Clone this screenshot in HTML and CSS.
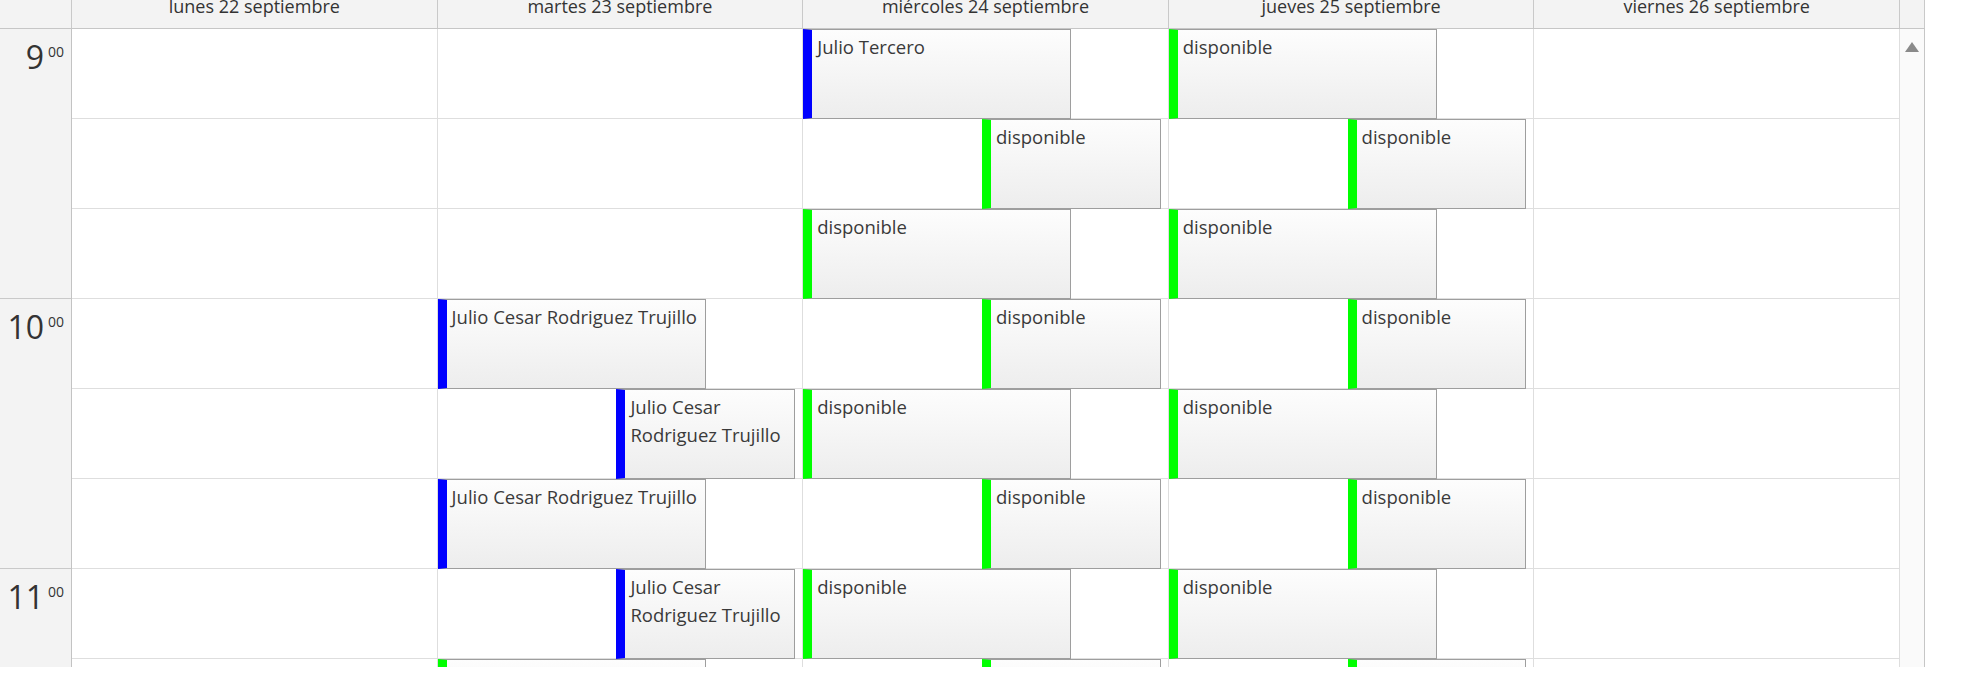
FILE: index.html
```html
<!DOCTYPE html>
<html lang="es">
<head>
  <meta charset="UTF-8">
  <title>Agenda semanal</title>
  <link rel="stylesheet" href="styles.css">
</head>
<body>
<div class="scheduler">
  <div class="head">
    <div class="corner"></div>
    <div class="day-head">lunes 22 septiembre</div>
    <div class="day-head">martes 23 septiembre</div>
    <div class="day-head">miércoles 24 septiembre</div>
    <div class="day-head">jueves 25 septiembre</div>
    <div class="day-head">viernes 26 septiembre</div>
    <div class="scroll-head"></div>
  </div>

  <div class="main">
    <div class="hours">
      <div class="hour"><span class="h">9</span><span class="m">00</span></div>
      <div class="hour"><span class="h">10</span><span class="m">00</span></div>
      <div class="hour"><span class="h">11</span><span class="m">00</span></div>
    </div>

    <!-- lunes -->
    <div class="day">
      <div class="slot"></div><div class="slot"></div><div class="slot"></div><div class="slot"></div>
      <div class="slot"></div><div class="slot"></div><div class="slot"></div><div class="slot"></div>
    </div>

    <!-- martes -->
    <div class="day">
      <div class="slot"></div><div class="slot"></div><div class="slot"></div><div class="slot"></div>
      <div class="slot"></div><div class="slot"></div><div class="slot"></div><div class="slot"></div>
      <div class="event first busy" style="top: 270px">Julio Cesar Rodriguez Trujillo</div>
      <div class="event second busy" style="top: 360px">Julio Cesar Rodriguez Trujillo</div>
      <div class="event first busy" style="top: 450px">Julio Cesar Rodriguez Trujillo</div>
      <div class="event second busy" style="top: 540px">Julio Cesar Rodriguez Trujillo</div>
      <div class="event first free" style="top: 630px">disponible</div>
    </div>

    <!-- miércoles -->
    <div class="day">
      <div class="slot"></div><div class="slot"></div><div class="slot"></div><div class="slot"></div>
      <div class="slot"></div><div class="slot"></div><div class="slot"></div><div class="slot"></div>
      <div class="event first busy" style="top: 0px">Julio Tercero</div>
      <div class="event second free" style="top: 90px">disponible</div>
      <div class="event first free" style="top: 180px">disponible</div>
      <div class="event second free" style="top: 270px">disponible</div>
      <div class="event first free" style="top: 360px">disponible</div>
      <div class="event second free" style="top: 450px">disponible</div>
      <div class="event first free" style="top: 540px">disponible</div>
      <div class="event second free" style="top: 630px">disponible</div>
    </div>

    <!-- jueves -->
    <div class="day">
      <div class="slot"></div><div class="slot"></div><div class="slot"></div><div class="slot"></div>
      <div class="slot"></div><div class="slot"></div><div class="slot"></div><div class="slot"></div>
      <div class="event first free" style="top: 0px">disponible</div>
      <div class="event second free" style="top: 90px">disponible</div>
      <div class="event first free" style="top: 180px">disponible</div>
      <div class="event second free" style="top: 270px">disponible</div>
      <div class="event first free" style="top: 360px">disponible</div>
      <div class="event second free" style="top: 450px">disponible</div>
      <div class="event first free" style="top: 540px">disponible</div>
      <div class="event second free" style="top: 630px">disponible</div>
    </div>

    <!-- viernes -->
    <div class="day">
      <div class="slot"></div><div class="slot"></div><div class="slot"></div><div class="slot"></div>
      <div class="slot"></div><div class="slot"></div><div class="slot"></div><div class="slot"></div>
    </div>

    <div class="scrollbar"><span class="arrow-up"></span></div>
  </div>
</div>
</body>
</html>
```

FILE: styles.css
```css
body {
  margin: 0;
  background: #fff;
  font-family: "Open Sans", "Noto Sans", sans-serif;
  color: #333;
}

.scheduler {
  width: 1925px;
  margin-top: -15px;
}

.head,
.main {
  display: grid;
  grid-template-columns: 72px repeat(5, 1fr) 25px;
}

.head {
  background: #f3f3f3;
  border-bottom: 1px solid #c6c6c6;
}
.corner,
.day-head {
  border-right: 1px solid #c9c9c9;
}
.day-head {
  height: 43px;
  line-height: 43px;
  font-size: 18px;
  text-align: center;
  white-space: nowrap;
  overflow: hidden;
}
.scroll-head {
  border-right: 1px solid #c9c9c9;
}

.main {
  height: 638px;
  overflow: hidden;
}

.hours {
  background: #f3f3f3;
  border-right: 1px solid #c3c3c3;
}
.hour {
  box-sizing: border-box;
  height: 270px;
  border-bottom: 1px solid #c9c9c9;
  display: flex;
  justify-content: flex-end;
  align-items: flex-start;
  padding: 12px 7px 0 0;
}
.hour .h {
  font-size: 32px;
  line-height: 32px;
}
.hour .m {
  font-size: 14px;
  line-height: 14px;
  margin: 4px 0 0 4px;
}

.day {
  position: relative;
  border-right: 1px solid #dedede;
}
.slot {
  box-sizing: border-box;
  height: 90px;
  border-bottom: 1px solid #dedede;
}

.event {
  position: absolute;
  box-sizing: border-box;
  height: 90px;
  padding: 3px 4px 0 5px;
  border: 1px solid #9e9e9e;
  border-left-width: 9px;
  background: linear-gradient(#fdfdfd, #ededed);
  font-size: 18.5px;
  line-height: 28px;
  color: #3a3a3a;
  overflow: hidden;
}
.event.first {
  left: 0;
  width: calc((100% - 7px) * 0.75);
}
.event.second {
  left: calc((100% - 7px) * 0.5);
  width: calc((100% - 7px) * 0.5);
}
.event.busy {
  border-left-color: #0000ff;
}
.event.free {
  border-left-color: #00ff00;
}

.scrollbar {
  background: #fafafa;
  border-right: 1px solid #c6c6c6;
  display: flex;
  justify-content: center;
  padding-top: 13px;
}
.arrow-up {
  width: 0;
  height: 0;
  border-left: 7px solid transparent;
  border-right: 7px solid transparent;
  border-bottom: 10px solid #8a8a8a;
}
```
